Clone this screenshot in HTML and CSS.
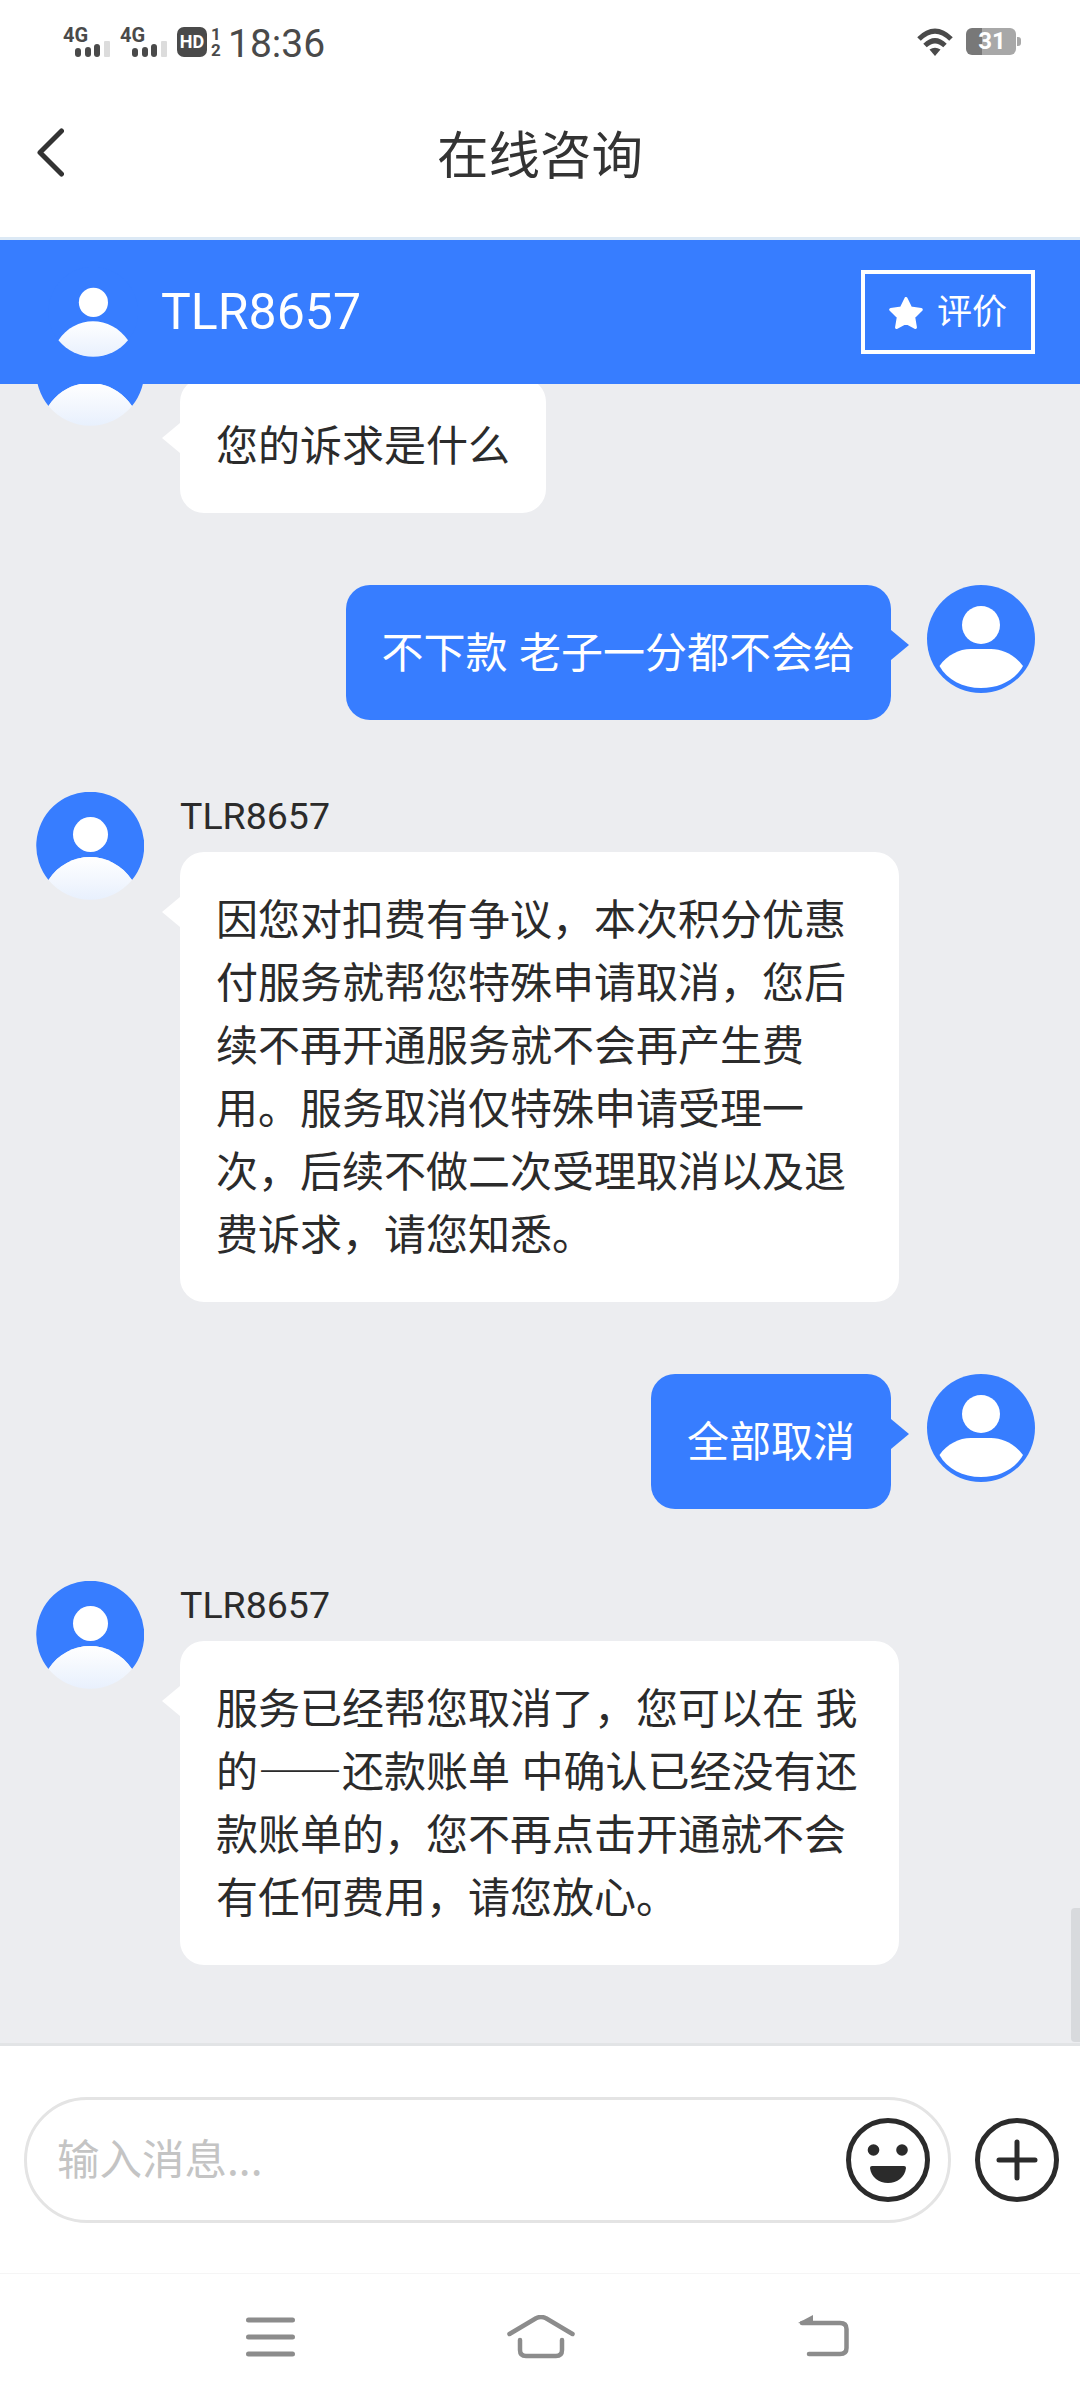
FILE: index.html
```html
<!DOCTYPE html>
<html lang="zh-CN">
<head>
    <meta charset="UTF-8">
    <meta name="viewport" content="width=device-width, initial-scale=1.0">
    <title>在线咨询</title>
    <link rel="stylesheet" href="styles.css">
</head>
<body>

    <svg class="icon-defs" width="0" height="0">
        <defs>
            <linearGradient id="bodyFade" x1="0" y1="0" x2="0" y2="1">
                <stop offset="0" stop-color="#ffffff"/>
                <stop offset="1" stop-color="#e8f0fd"/>
            </linearGradient>
            <symbol id="avatarAgent" viewBox="0 0 108 108">
                <path d="M12.5 88A54 54 0 1 1 96 88C86 73 70 65 54 65C38 65 22 73 12.5 88Z" fill="#377dff"/>
                <circle cx="54.5" cy="42.5" r="17.5" fill="#fff"/>
                <path d="M12.5 88C22 73 38 65 54 65C70 65 86 73 96 88A54 54 0 0 1 12.5 88Z" fill="url(#bodyFade)"/>
            </symbol>
            <symbol id="avatarUser" viewBox="0 0 108 108">
                <circle cx="54" cy="54" r="54" fill="#377dff"/>
                <circle cx="54" cy="40" r="19" fill="#fff"/>
                <path d="M12.5 81C20 70 32 64 44 64H64C76 64 88 70 96 81C88 95 72 103 54 103C36 103 20 95 12.5 81Z" fill="#fff"/>
            </symbol>
            <symbol id="signalBars" viewBox="0 0 47 30">
                <rect x="12" y="21" width="6" height="9" rx="3" fill="#4a4a4a"/>
                <rect x="22" y="20" width="6" height="10" rx="3" fill="#4a4a4a"/>
                <rect x="31" y="17" width="6" height="13" rx="3" fill="#4a4a4a"/>
                <rect x="41" y="14" width="6" height="16" rx="1" fill="#dcdcdc"/>
            </symbol>
        </defs>
    </svg>

    <!-- STATUS BAR -->
    <div class="status-bar">
        <div class="status-left">
            <div class="signal">
                <svg class="signal-bars"><use href="#signalBars"/></svg>
                <span class="signal-label">4G</span>
            </div>
            <div class="signal">
                <svg class="signal-bars"><use href="#signalBars"/></svg>
                <span class="signal-label">4G</span>
            </div>
            <div class="hd-box">HD</div>
            <div class="sim-stack"><span>1</span><span>2</span></div>
            <span class="clock">18:36</span>
        </div>
        <div class="status-right">
            <svg width="36" height="28" viewBox="0 0 36 28" fill="none" stroke="#4a4a4a" stroke-width="5">
                <path d="M2 11Q18 -5 34 11"/>
                <path d="M8 17.5Q18 8 28 17.5"/>
                <path d="M12.5 21.5Q18 18 23.5 21.5L18 28Z" fill="#4a4a4a" stroke="none"/>
            </svg>
            <div class="battery">31</div>
        </div>
    </div>

    <!-- NAV -->
    <header class="app-header">
        <svg class="back-icon" width="27" height="49" viewBox="0 0 27 49" fill="none" stroke="#333" stroke-width="5" stroke-linecap="round" stroke-linejoin="round">
            <path d="M24.5 3L3 24.5L24.5 46"/>
        </svg>
        <div class="header-title">在线咨询</div>
    </header>

    <!-- AGENT BAR -->
    <div class="agent-bar">
        <svg class="agent-avatar"><use href="#avatarAgent"/></svg>
        <div class="agent-name">TLR8657</div>
        <button class="btn-rate">
            <svg width="34" height="32" viewBox="1.5 1.5 31 29.6">
                <path d="M17 3L21.3 11.8L31 13.2L24 20L25.6 29.6L17 25L8.4 29.6L10 20L3 13.2L12.7 11.8Z" fill="#fff" stroke="#fff" stroke-width="3" stroke-linejoin="round"/>
            </svg>
            评价
        </button>
    </div>

    <!-- CHAT -->
    <main class="chat-body">
        <div class="chat-list">
            <div class="msg">
                <svg class="avatar"><use href="#avatarAgent"/></svg>
                <div class="msg-content msg-scrolled">
                    <div class="bubble">您的诉求是什么</div>
                </div>
            </div>
            <div class="msg msg-user">
                <svg class="avatar"><use href="#avatarUser"/></svg>
                <div class="bubble">不下款 老子一分都不会给</div>
            </div>
            <div class="msg">
                <svg class="avatar"><use href="#avatarAgent"/></svg>
                <div class="msg-content">
                    <div class="msg-name">TLR8657</div>
                    <div class="bubble">因您对扣费有争议，本次积分优惠付服务就帮您特殊申请取消，您后续不再开通服务就不会再产生费用。服务取消仅特殊申请受理一次，后续不做二次受理取消以及退费诉求，请您知悉。</div>
                </div>
            </div>
            <div class="msg msg-user">
                <svg class="avatar"><use href="#avatarUser"/></svg>
                <div class="bubble">全部取消</div>
            </div>
            <div class="msg">
                <svg class="avatar"><use href="#avatarAgent"/></svg>
                <div class="msg-content">
                    <div class="msg-name">TLR8657</div>
                    <div class="bubble">服务已经帮您取消了，您可以在 我的——还款账单 中确认已经没有还款账单的，您不再点击开通就不会有任何费用，请您放心。</div>
                </div>
            </div>
        </div>
        <div class="scroll-thumb"></div>
    </main>

    <!-- INPUT -->
    <div class="input-bar">
        <div class="input-pill">
            <input type="text" class="msg-input" placeholder="输入消息...">
            <svg width="84" height="84" viewBox="0 0 84 84">
                <circle cx="42" cy="42" r="39.5" fill="none" stroke="#2b2b2b" stroke-width="5"/>
                <circle cx="27.5" cy="32" r="5.8" fill="#2b2b2b"/>
                <circle cx="56" cy="32" r="5.8" fill="#2b2b2b"/>
                <path d="M26 48H58Q60 48 60 50C59 59 51 65 42 65C33 65 25 59 24 50Q24 48 26 48Z" fill="#2b2b2b"/>
            </svg>
        </div>
        <svg width="84" height="84" viewBox="0 0 84 84" fill="none" stroke="#2b2b2b" stroke-width="5">
            <circle cx="42" cy="42" r="39.5"/>
            <path d="M24 42H60M42 24V60" stroke-linecap="round"/>
        </svg>
    </div>

    <!-- SYSTEM NAV -->
    <nav class="system-nav">
        <svg class="nav-icon" width="49" height="44" viewBox="0 0 49 44">
            <path d="M2.5 5H46.5M2.5 22H46.5M2.5 39H46.5" stroke-width="5"/>
        </svg>
        <svg class="nav-icon nav-home" width="68" height="44" viewBox="0 0 68 44">
            <path d="M2.5 19L29 3.2Q34 .8 39 3.2L65.5 19"/>
            <path d="M13 25V35Q13 41 19 41H49Q55 41 55 35V25"/>
        </svg>
        <svg class="nav-icon" width="51" height="44" viewBox="0 0 51 44">
            <path d="M4 8H42Q48.5 8 48.5 14V33Q48.5 39 42 39H11"/>
            <path class="nav-arrow" d="M0 8L15 0V10Z"/>
        </svg>
    </nav>

</body>
</html>
```

FILE: styles.css
```css
:root { --blue: #377dff; --bg: #ecedf0; --text: #2b2b2b; --gray: #4a4a4a; }
* { box-sizing: border-box; font-family: 'Roboto', 'Noto Sans CJK SC', sans-serif; }

body { margin: 0; width: 1080px; height: 2400px; background: white; color: var(--text); display: flex; flex-direction: column; overflow: hidden; }
.icon-defs { position: absolute; }

/* STATUS BAR */
.status-bar { height: 70px; padding: 13px 59px 0 63px; display: flex; justify-content: space-between; align-items: center; flex-shrink: 0; color: var(--gray); }
.status-left { display: flex; align-items: center; gap: 10px; }
.status-right { display: flex; align-items: center; gap: 13px; }
.signal { width: 47px; height: 30px; display: grid; }
.signal > * { grid-area: 1 / 1; }
.signal-bars { width: 47px; height: 30px; }
.signal-label { font-size: 20px; font-weight: 700; line-height: 16px; height: 16px; }
.hd-box { width: 30px; height: 30px; background: var(--gray); color: white; border-radius: 7px; font-size: 18px; font-weight: 700; display: flex; align-items: center; justify-content: center; margin-right: -6px; }
.sim-stack { width: 10px; height: 30px; font-size: 17px; font-weight: 700; line-height: 14px; display: flex; flex-direction: column; justify-content: space-between; align-items: center; margin-right: -3px; }
.clock { font-size: 39px; line-height: 34px; margin-top: 5px; }
.battery { width: 50px; height: 27px; border-radius: 6px; background: linear-gradient(90deg, #787878 16px, #a8a8a8 16px); color: white; font-size: 24px; font-weight: 700; line-height: 27px; text-align: center; padding-left: 2px; position: relative; margin-right: 5px; }
.battery::after { content: ''; position: absolute; top: 9px; right: -5px; width: 4px; height: 9px; background: #a8a8a8; border-radius: 0 3px 3px 0; }

/* NAV */
.app-header { height: 170px; padding-bottom: 5px; border-bottom: 3px solid #dce9f5; display: grid; grid-template-columns: 1fr auto 1fr; align-items: center; flex-shrink: 0; }
.back-icon { margin-left: 37px; margin-top: 2px; }
.header-title { font-size: 51.5px; color: #333; }

/* AGENT BAR */
.agent-bar { height: 144px; background: var(--blue); color: white; display: flex; align-items: center; padding: 0 45px 0 48px; flex-shrink: 0; position: relative; z-index: 1; }
.agent-avatar { width: 90px; height: 90px; }
.agent-name { font-size: 50px; margin-left: 23px; flex: 1; }
.btn-rate { width: 174px; height: 84px; background: transparent; border: 4px solid white; color: white; font-size: 35px; line-height: 40px; display: flex; align-items: center; justify-content: center; gap: 14px; padding: 1px 0 0; }

/* CHAT */
.chat-body { flex: 1; min-height: 0; background: var(--bg); border-bottom: 3px solid #e2e4e6; overflow: hidden; position: relative; }
.chat-list { margin-top: -66px; padding: 0 45px 0 36px; display: flex; flex-direction: column; gap: 72px; }
.msg { display: flex; gap: 36px; align-items: flex-start; }
.msg-user { flex-direction: row-reverse; }
.avatar { width: 108px; height: 108px; flex-shrink: 0; }
.msg-content { min-width: 0; }
.msg-scrolled { padding-top: 60px; }
.msg-name { font-size: 37.5px; line-height: 49px; margin-bottom: 11px; }

.bubble { position: relative; max-width: 719px; width: fit-content; padding: 33px 36px 39px; background: white; border-radius: 24px; font-family: 'Noto Sans CJK SC', sans-serif; font-size: 42px; line-height: 63px; word-spacing: 2px; }
.bubble::before { content: ''; position: absolute; top: 45px; left: -18px; border-style: solid; border-width: 15px 18px 15px 0; border-color: transparent white transparent transparent; }
.msg-user .bubble { background: var(--blue); color: white; }
.msg-user .bubble::before { left: auto; right: -18px; border-width: 15px 0 15px 18px; border-color: transparent transparent transparent var(--blue); }

.scroll-thumb { position: absolute; top: 1524px; right: 0; width: 9px; height: 134px; background: #d8dadd; border-radius: 4px 0 0 4px; }

/* INPUT */
.input-bar { height: 227px; padding: 51px 21px 0 24px; display: flex; align-items: flex-start; gap: 24px; flex-shrink: 0; }
.input-pill { width: 927px; height: 126px; border: 3px solid #e4e4e4; border-radius: 63px; padding: 0 18px 0 30px; display: flex; align-items: center; gap: 12px; }
.input-pill + svg { margin-top: 21px; }
.msg-input { flex: 1; min-width: 0; border: none; outline: none; background: transparent; font-family: 'Noto Sans CJK SC', sans-serif; font-size: 42.5px; padding: 0 0 8px; }
.msg-input::placeholder { color: #c4c4c4; opacity: 1; }

/* SYSTEM NAV */
.system-nav { height: 127px; border-top: 1px solid #f5f5f5; padding: 41px 0 0 246px; display: flex; align-items: flex-start; flex-shrink: 0; }
.nav-icon { fill: none; stroke: #8c8c8c; stroke-width: 4.5; stroke-linecap: round; stroke-linejoin: round; }
.nav-home { margin: 0 223px 0 212px; }
.nav-arrow { fill: #8c8c8c; stroke: none; }
```
